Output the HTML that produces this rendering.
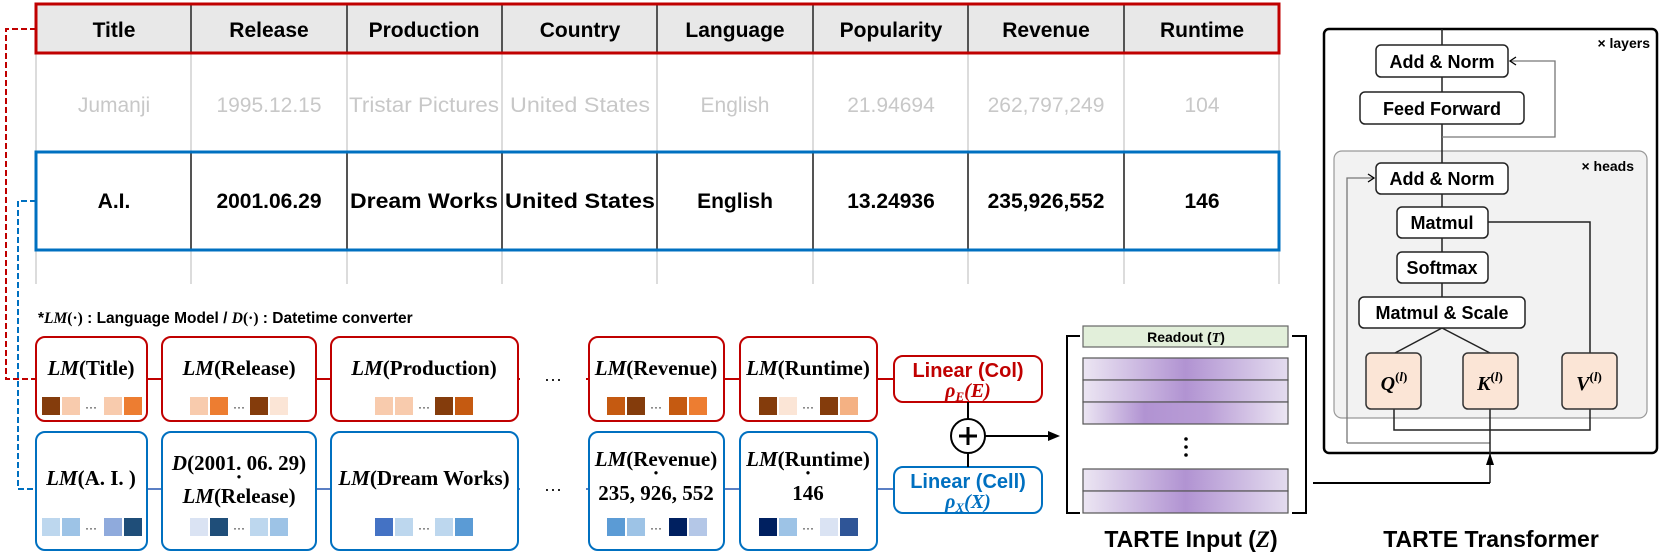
<!DOCTYPE html>
<html><head><meta charset="utf-8"><style>
html,body{margin:0;padding:0;background:#fff;}
svg{display:block;}
.hd{font-family:"Liberation Sans",Arial,sans-serif;font-weight:bold;font-size:21px;fill:#000;}
.gr{font-family:"Liberation Sans",Arial,sans-serif;font-size:21px;fill:#c8c8c8;}
.bd{font-family:"Liberation Sans",Arial,sans-serif;font-weight:bold;font-size:21px;fill:#000;}
.sf{font-family:"Liberation Serif",serif;font-weight:bold;font-size:21px;fill:#000;}
.tb{font-family:"Liberation Sans",Arial,sans-serif;font-weight:bold;font-size:18px;fill:#000;}
</style></head><body>
<svg width="1661" height="554" viewBox="0 0 1661 554" xmlns="http://www.w3.org/2000/svg">
<defs>
<linearGradient id="p1" x1="0" x2="1" y1="0" y2="0"><stop offset="0" stop-color="#ece6f3"/><stop offset="0.5" stop-color="#b193d2"/><stop offset="1" stop-color="#e4dcef"/></linearGradient>
<linearGradient id="p2" x1="0" x2="1" y1="0" y2="0"><stop offset="0" stop-color="#ece6f3"/><stop offset="0.3" stop-color="#b193d2"/><stop offset="0.6" stop-color="#b99dd6"/><stop offset="1" stop-color="#ece6f3"/></linearGradient>
</defs>
<rect x="36" y="4" width="1243" height="49" fill="#e8e8e8"/>
<g stroke="#d0d0d0" stroke-width="1.5">
<line x1="36" y1="53" x2="36" y2="284"/><line x1="1279" y1="53" x2="1279" y2="284"/>
<line x1="191" y1="53" x2="191" y2="284"/><line x1="347" y1="53" x2="347" y2="284"/><line x1="502" y1="53" x2="502" y2="284"/><line x1="657" y1="53" x2="657" y2="284"/><line x1="813" y1="53" x2="813" y2="284"/><line x1="968" y1="53" x2="968" y2="284"/><line x1="1124" y1="53" x2="1124" y2="284"/>
</g>
<g stroke="#222" stroke-width="1.5">
<line x1="191" y1="4" x2="191" y2="53"/><line x1="347" y1="4" x2="347" y2="53"/><line x1="502" y1="4" x2="502" y2="53"/><line x1="657" y1="4" x2="657" y2="53"/><line x1="813" y1="4" x2="813" y2="53"/><line x1="968" y1="4" x2="968" y2="53"/><line x1="1124" y1="4" x2="1124" y2="53"/>
<line x1="191" y1="152" x2="191" y2="250"/><line x1="347" y1="152" x2="347" y2="250"/><line x1="502" y1="152" x2="502" y2="250"/><line x1="657" y1="152" x2="657" y2="250"/><line x1="813" y1="152" x2="813" y2="250"/><line x1="968" y1="152" x2="968" y2="250"/><line x1="1124" y1="152" x2="1124" y2="250"/>
</g>
<rect x="36" y="4" width="1243" height="49" fill="none" stroke="#c00000" stroke-width="3"/>
<rect x="36" y="152" width="1243" height="98" fill="none" stroke="#0070c0" stroke-width="3"/>
<g text-anchor="middle">
<text class="hd" x="114" y="37">Title</text><text class="hd" x="269" y="37">Release</text><text class="hd" x="424" y="37">Production</text><text class="hd" x="580" y="37">Country</text><text class="hd" x="735" y="37">Language</text><text class="hd" x="891" y="37">Popularity</text><text class="hd" x="1046" y="37">Revenue</text><text class="hd" x="1202" y="37">Runtime</text>
<text class="gr" x="114" y="112">Jumanji</text><text class="gr" x="269" y="112">1995.12.15</text><text class="gr" x="424" y="112" textLength="150" lengthAdjust="spacingAndGlyphs">Tristar Pictures</text><text class="gr" x="580" y="112" textLength="140" lengthAdjust="spacingAndGlyphs">United States</text><text class="gr" x="735" y="112">English</text><text class="gr" x="891" y="112">21.94694</text><text class="gr" x="1046" y="112">262,797,249</text><text class="gr" x="1202" y="112">104</text>
<text class="bd" x="114" y="208">A.I.</text><text class="bd" x="269" y="208">2001.06.29</text><text class="bd" x="424" y="208" textLength="148" lengthAdjust="spacingAndGlyphs">Dream Works</text><text class="bd" x="580" y="208" textLength="150" lengthAdjust="spacingAndGlyphs">United States</text><text class="bd" x="735" y="208">English</text><text class="bd" x="891" y="208">13.24936</text><text class="bd" x="1046" y="208">235,926,552</text><text class="bd" x="1202" y="208">146</text>
</g>
<polyline points="36,29 6,29 6,379 36,379" fill="none" stroke="#c00000" stroke-width="2" stroke-dasharray="6,3"/>
<polyline points="36,201 18,201 18,489 36,489" fill="none" stroke="#0070c0" stroke-width="2" stroke-dasharray="6,3"/>
<text x="38" y="323" style="font-family:'Liberation Sans',sans-serif;font-weight:bold;font-size:15.5px">*<tspan font-family="Liberation Serif" font-style="italic">LM</tspan><tspan font-family="Liberation Serif">(·)</tspan> : Language Model / <tspan font-family="Liberation Serif" font-style="italic">D</tspan><tspan font-family="Liberation Serif">(·)</tspan> : Datetime converter</text>
<line x1="147" y1="379" x2="894" y2="379" stroke="#c00000" stroke-width="2"/>
<line x1="147" y1="489" x2="894" y2="489" stroke="#5b7fc4" stroke-width="2"/>
<rect x="520" y="366" width="66" height="30" fill="#fff"/><rect x="520" y="476" width="66" height="30" fill="#fff"/>
<text x="553" y="385" text-anchor="middle" style="font-family:'Liberation Sans';font-size:18px">···</text>
<text x="553" y="495" text-anchor="middle" style="font-family:'Liberation Sans';font-size:18px">···</text>
<g fill="#fff" stroke="#c00000" stroke-width="2">
<rect x="36" y="337" width="111" height="84" rx="9"/><rect x="162" y="337" width="154" height="84" rx="9"/><rect x="331" y="337" width="187" height="84" rx="9"/><rect x="589" y="337" width="135" height="84" rx="9"/><rect x="740" y="337" width="137" height="84" rx="9"/>
<rect x="894" y="356" width="148" height="46" rx="9"/>
</g>
<g fill="#fff" stroke="#0070c0" stroke-width="2">
<rect x="36" y="432" width="111" height="118" rx="9"/><rect x="162" y="432" width="154" height="118" rx="9"/><rect x="331" y="432" width="187" height="118" rx="9"/><rect x="589" y="432" width="135" height="118" rx="9"/><rect x="740" y="432" width="137" height="118" rx="9"/>
<rect x="894" y="467" width="148" height="46" rx="9"/>
</g>
<g text-anchor="middle">
<text class="sf" x="91" y="375"><tspan font-style="italic">LM</tspan>(Title)</text>
<text class="sf" x="239" y="375"><tspan font-style="italic">LM</tspan>(Release)</text>
<text class="sf" x="424" y="375"><tspan font-style="italic">LM</tspan>(Production)</text>
<text class="sf" x="656" y="375"><tspan font-style="italic">LM</tspan>(Revenue)</text>
<text class="sf" x="808" y="375"><tspan font-style="italic">LM</tspan>(Runtime)</text>
<text class="sf" x="91" y="485"><tspan font-style="italic">LM</tspan>(A. I. )</text>
<text class="sf" x="239" y="470"><tspan font-style="italic">D</tspan>(2001. 06. 29)</text>
<text class="sf" x="239" y="484">·</text>
<text class="sf" x="239" y="503"><tspan font-style="italic">LM</tspan>(Release)</text>
<text class="sf" x="424" y="485"><tspan font-style="italic">LM</tspan>(Dream Works)</text>
<text class="sf" x="656" y="466"><tspan font-style="italic">LM</tspan>(Revenue)</text>
<text class="sf" x="656" y="480">·</text>
<text class="sf" x="656" y="500">235, 926, 552</text>
<text class="sf" x="808" y="466"><tspan font-style="italic">LM</tspan>(Runtime)</text>
<text class="sf" x="808" y="480">·</text>
<text class="sf" x="808" y="500">146</text>
</g>
<g>
<rect x="42" y="397" width="18" height="18" fill="#843c0c"/><rect x="62" y="397" width="18" height="18" fill="#f8cbad"/><rect x="104" y="397" width="18" height="18" fill="#f8cbad"/><rect x="124" y="397" width="18" height="18" fill="#ed7d31"/>
<rect x="190" y="397" width="18" height="18" fill="#f8cbad"/><rect x="210" y="397" width="18" height="18" fill="#ed7d31"/><rect x="250" y="397" width="18" height="18" fill="#843c0c"/><rect x="270" y="397" width="18" height="18" fill="#fbe5d6"/>
<rect x="375" y="397" width="18" height="18" fill="#f8cbad"/><rect x="395" y="397" width="18" height="18" fill="#f8cbad"/><rect x="435" y="397" width="18" height="18" fill="#843c0c"/><rect x="455" y="397" width="18" height="18" fill="#c55a11"/>
<rect x="607" y="397" width="18" height="18" fill="#c55a11"/><rect x="627" y="397" width="18" height="18" fill="#843c0c"/><rect x="669" y="397" width="18" height="18" fill="#c55a11"/><rect x="689" y="397" width="18" height="18" fill="#ed7d31"/>
<rect x="759" y="397" width="18" height="18" fill="#843c0c"/><rect x="779" y="397" width="18" height="18" fill="#fbe5d6"/><rect x="820" y="397" width="18" height="18" fill="#843c0c"/><rect x="840" y="397" width="18" height="18" fill="#f4b183"/>
<rect x="42" y="518" width="18" height="18" fill="#bdd7ee"/><rect x="62" y="518" width="18" height="18" fill="#9dc3e6"/><rect x="104" y="518" width="18" height="18" fill="#8faadc"/><rect x="124" y="518" width="18" height="18" fill="#1f4e79"/>
<rect x="190" y="518" width="18" height="18" fill="#dae3f3"/><rect x="210" y="518" width="18" height="18" fill="#1f4e79"/><rect x="250" y="518" width="18" height="18" fill="#bdd7ee"/><rect x="270" y="518" width="18" height="18" fill="#9dc3e6"/>
<rect x="375" y="518" width="18" height="18" fill="#4472c4"/><rect x="395" y="518" width="18" height="18" fill="#bdd7ee"/><rect x="435" y="518" width="18" height="18" fill="#bdd7ee"/><rect x="455" y="518" width="18" height="18" fill="#5b9bd5"/>
<rect x="607" y="518" width="18" height="18" fill="#5b9bd5"/><rect x="627" y="518" width="18" height="18" fill="#9dc3e6"/><rect x="669" y="518" width="18" height="18" fill="#002060"/><rect x="689" y="518" width="18" height="18" fill="#b4c7e7"/>
<rect x="759" y="518" width="18" height="18" fill="#002060"/><rect x="779" y="518" width="18" height="18" fill="#9dc3e6"/><rect x="820" y="518" width="18" height="18" fill="#dae3f3"/><rect x="840" y="518" width="18" height="18" fill="#2f5597"/>
</g>
<g text-anchor="middle" style="font-family:'Liberation Sans';font-size:12px">
<text x="91" y="411">···</text><text x="239" y="411">···</text><text x="424" y="411">···</text><text x="656" y="411">···</text><text x="808" y="411">···</text>
<text x="91" y="532">···</text><text x="239" y="532">···</text><text x="424" y="532">···</text><text x="656" y="532">···</text><text x="808" y="532">···</text>
</g>
<text x="968" y="377" text-anchor="middle" style="font-family:'Liberation Sans';font-weight:bold;font-size:20px;fill:#c00000">Linear (Col)</text>
<text x="968" y="397" text-anchor="middle" style="font-family:'Liberation Serif';font-weight:bold;font-style:italic;font-size:20px;fill:#c00000">ρ<tspan font-size="13" dy="4">E</tspan><tspan dy="-4">(E)</tspan></text>
<text x="968" y="488" text-anchor="middle" style="font-family:'Liberation Sans';font-weight:bold;font-size:20px;fill:#0070c0">Linear (Cell)</text>
<text x="968" y="508" text-anchor="middle" style="font-family:'Liberation Serif';font-weight:bold;font-style:italic;font-size:20px;fill:#0070c0">ρ<tspan font-size="13" dy="4">X</tspan><tspan dy="-4">(X)</tspan></text>
<line x1="968" y1="402" x2="968" y2="467" stroke="#000" stroke-width="2"/>
<circle cx="968" cy="436" r="17" fill="#fff" stroke="#000" stroke-width="2"/>
<line x1="959" y1="436" x2="977" y2="436" stroke="#000" stroke-width="3"/><line x1="968" y1="427" x2="968" y2="445" stroke="#000" stroke-width="3"/>
<line x1="985" y1="436" x2="1052" y2="436" stroke="#000" stroke-width="2"/>
<polygon points="1060,436 1048,431 1048,441" fill="#000"/>
<polyline points="1080,336 1067,336 1067,513 1080,513" fill="none" stroke="#000" stroke-width="2"/>
<polyline points="1292,336 1306,336 1306,513 1292,513" fill="none" stroke="#000" stroke-width="2"/>
<rect x="1083" y="326" width="205" height="21" fill="#e2efda" stroke="#666" stroke-width="1.2"/>
<text x="1186" y="342" text-anchor="middle" style="font-family:'Liberation Sans';font-weight:bold;font-size:14px">Readout (<tspan font-family="Liberation Serif" font-style="italic">T</tspan>)</text>
<rect x="1083" y="358" width="205" height="22" fill="url(#p1)" stroke="#555" stroke-width="1.2"/>
<rect x="1083" y="380" width="205" height="22" fill="url(#p1)" stroke="#555" stroke-width="1.2"/>
<rect x="1083" y="402" width="205" height="22" fill="url(#p2)" stroke="#555" stroke-width="1.2"/>
<circle cx="1186" cy="439" r="1.8"/><circle cx="1186" cy="447" r="1.8"/><circle cx="1186" cy="455" r="1.8"/>
<rect x="1083" y="469" width="205" height="22" fill="url(#p1)" stroke="#555" stroke-width="1.2"/>
<rect x="1083" y="491" width="205" height="22" fill="url(#p1)" stroke="#555" stroke-width="1.2"/>
<text x="1191" y="547" text-anchor="middle" style="font-family:'Liberation Sans';font-weight:bold;font-size:23px">TARTE Input (<tspan font-family="Liberation Serif" font-style="italic">Z</tspan>)</text>
<text x="1491" y="547" text-anchor="middle" style="font-family:'Liberation Sans';font-weight:bold;font-size:23px">TARTE Transformer</text>
<rect x="1324" y="29" width="333" height="424" rx="5" fill="#fff" stroke="#000" stroke-width="2.5"/>
<rect x="1334" y="151" width="313" height="267" rx="8" fill="#f2f2f2" stroke="#999" stroke-width="1.2"/>
<line x1="1442" y1="29" x2="1442" y2="297" stroke="#222" stroke-width="1.5"/>
<polyline points="1442,137 1555,137 1555,61 1510,61" fill="none" stroke="#777" stroke-width="1.3"/>
<polyline points="1516,57 1510,61 1516,65" fill="none" stroke="#000" stroke-width="1.3"/>
<polyline points="1347,443 1347,178 1374,178" fill="none" stroke="#777" stroke-width="1.3"/>
<polyline points="1368,174 1374,178 1368,182" fill="none" stroke="#000" stroke-width="1.3"/>
<line x1="1347" y1="443" x2="1490" y2="443" stroke="#777" stroke-width="1.3"/>
<polyline points="1488,222 1590,222 1590,353" fill="none" stroke="#222" stroke-width="1.5"/>
<polyline points="1394,409 1394,430 1590,430 1590,409" fill="none" stroke="#222" stroke-width="1.5"/>
<line x1="1490" y1="409" x2="1490" y2="483" stroke="#222" stroke-width="1.5"/>
<polyline points="1313,483 1490,483" fill="none" stroke="#000" stroke-width="2"/>
<polygon points="1490,453 1486,465 1494,465" fill="#000"/>
<line x1="1442" y1="328" x2="1395" y2="353" stroke="#222" stroke-width="1.5"/>
<line x1="1442" y1="328" x2="1490" y2="353" stroke="#222" stroke-width="1.5"/>
<g fill="#fff" stroke="#222" stroke-width="1.5">
<rect x="1376" y="45" width="132" height="32" rx="5"/><rect x="1360" y="92" width="164" height="32" rx="5"/>
<rect x="1376" y="163" width="132" height="31" rx="5"/><rect x="1397" y="207" width="91" height="31" rx="5"/><rect x="1397" y="252" width="91" height="31" rx="5"/><rect x="1359" y="297" width="166" height="31" rx="5"/>
</g>
<g fill="#fbe5d6" stroke="#333" stroke-width="1.5">
<rect x="1366" y="353" width="55" height="56" rx="5"/><rect x="1463" y="353" width="55" height="56" rx="5"/><rect x="1562" y="353" width="55" height="56" rx="5"/>
</g>
<g text-anchor="middle">
<text class="tb" x="1442" y="68">Add &amp; Norm</text><text class="tb" x="1442" y="115">Feed Forward</text>
<text class="tb" x="1442" y="185">Add &amp; Norm</text><text class="tb" x="1442" y="229">Matmul</text><text class="tb" x="1442" y="274">Softmax</text><text class="tb" x="1442" y="319">Matmul &amp; Scale</text>
</g>
<g style="font-family:'Liberation Serif';font-weight:bold;font-style:italic;font-size:20px" text-anchor="middle">
<text x="1394" y="390">Q<tspan font-size="13" dy="-9" font-style="normal">(</tspan><tspan font-size="13">l</tspan><tspan font-size="13" font-style="normal">)</tspan></text>
<text x="1490" y="390">K<tspan font-size="13" dy="-9" font-style="normal">(</tspan><tspan font-size="13">l</tspan><tspan font-size="13" font-style="normal">)</tspan></text>
<text x="1589" y="390">V<tspan font-size="13" dy="-9" font-style="normal">(</tspan><tspan font-size="13">l</tspan><tspan font-size="13" font-style="normal">)</tspan></text>
</g>
<text x="1650" y="48" text-anchor="end" style="font-family:'Liberation Sans';font-size:14px;font-weight:bold">× layers</text>
<text x="1634" y="171" text-anchor="end" style="font-family:'Liberation Sans';font-size:14px;font-weight:bold">× heads</text>
</svg>
</body></html>
